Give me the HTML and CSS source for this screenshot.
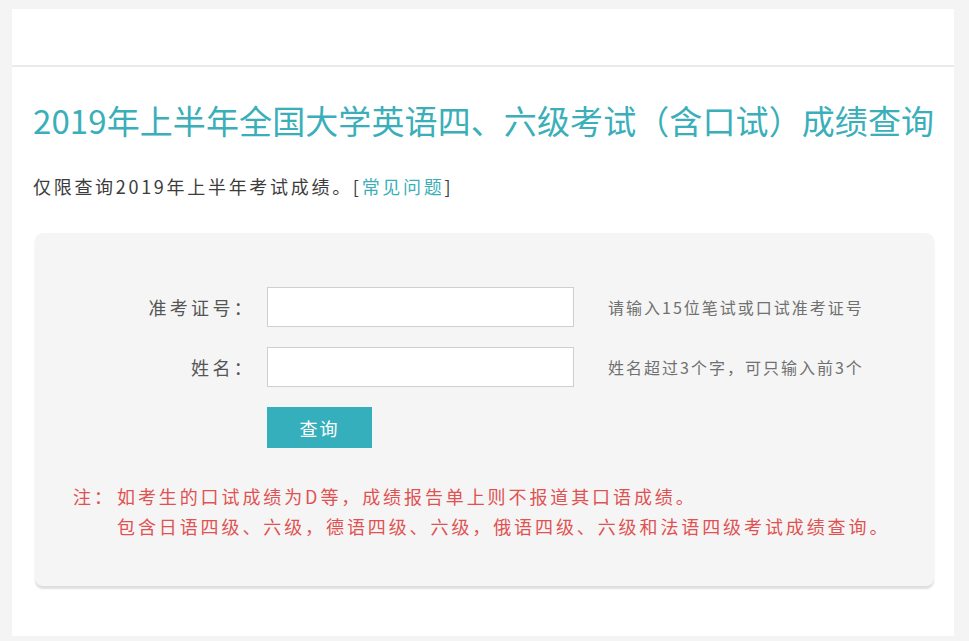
FILE: index.html
```html
<!DOCTYPE html>
<html lang="zh-CN">

<head>
    <meta charset="UTF-8">
    <meta name="viewport" content="width=device-width, initial-scale=1.0">
    <title>2019年上半年全国大学英语四、六级考试（含口试）成绩查询</title>
    <link rel="stylesheet" href="styles.css">
</head>

<body>
    <div class="page">
        <div class="page-header"></div>

        <div class="page-content">
            <h1 class="title">2019年上半年全国大学英语四、六级考试（含口试）成绩查询</h1>
            <p class="subtitle">仅限查询2019年上半年考试成绩。[<a href="#" class="faq-link">常见问题</a>]</p>

            <!-- Query Form -->
            <form class="query-box" id="query-form">
                <div class="form-row">
                    <label for="zkzh">准考证号：</label>
                    <input type="text" id="zkzh" name="zkzh">
                    <span class="hint">请输入15位笔试或口试准考证号</span>
                </div>

                <div class="form-row">
                    <label for="xm">姓名：</label>
                    <input type="text" id="xm" name="xm">
                    <span class="hint">姓名超过3个字，可只输入前3个</span>
                </div>

                <div class="form-row">
                    <span></span>
                    <button type="submit" class="btn-query">查询</button>
                </div>

                <!-- Notice -->
                <div class="note">
                    <span class="note-tag">注：</span>
                    <div class="note-text">
                        <p>如考生的口试成绩为D等，成绩报告单上则不报道其口语成绩。</p>
                        <p>包含日语四级、六级，德语四级、六级，俄语四级、六级和法语四级考试成绩查询。</p>
                    </div>
                </div>
            </form>
        </div>
    </div>
</body>

</html>
```

FILE: styles.css
```css
body {
    font-family: "Microsoft YaHei", "Noto Sans CJK SC", sans-serif;
    background: #f4f4f4;
    color: #333;
    margin: 0;
    padding: 9px 15px 5px 12px;
    box-sizing: border-box;
    height: 641px;
    overflow: hidden;
}

.page {
    background: #ffffff;
    height: 627px;
}

.page-header {
    height: 56px;
    border-bottom: 2px solid #ebebeb;
}

.page-content {
    padding: 32px 20px 0 23px;
}

.title {
    margin: 0 0 0 -2px;
    color: #3aafba;
    font-size: 33px;
    font-weight: normal;
    line-height: 42px;
    letter-spacing: 0.1px;
    white-space: nowrap;
}

.subtitle {
    margin: 33px 0 0 -2px;
    font-size: 18px;
    line-height: 24px;
    letter-spacing: 2.7px;
    color: #3c3c3c;
}

.faq-link {
    color: #3aafba;
    text-decoration: none;
}

.query-box {
    margin-top: 35px;
    background: #f5f5f5;
    border-radius: 8px;
    box-shadow: 0 3px 2px rgba(0, 0, 0, 0.13);
    padding: 54px 0 45px 0;
}

.form-row {
    display: grid;
    grid-template-columns: 220px 307px auto;
    column-gap: 12px;
    align-items: center;
    margin-bottom: 20px;
}

label {
    text-align: right;
    font-size: 18px;
    letter-spacing: 3.3px;
    color: #555;
}

input[type="text"] {
    height: 40px;
    border: 1px solid #cfcfcf;
    background: #ffffff;
    box-sizing: border-box;
    font-size: 16px;
    padding: 0 8px;
    font-family: inherit;
}

.hint {
    margin-left: 22px;
    font-size: 16px;
    letter-spacing: 2px;
    color: #707070;
}

.btn-query {
    width: 105px;
    height: 41px;
    border: none;
    background: #35afbb;
    color: #ffffff;
    font-family: inherit;
    font-size: 18px;
    letter-spacing: 2px;
    cursor: pointer;
}

.note {
    display: flex;
    margin: 33px 0 0 38px;
    color: #e05252;
    font-size: 18px;
    line-height: 30px;
    letter-spacing: 2.9px;
}

.note-tag {
    width: 44px;
    flex-shrink: 0;
}

.note-text p {
    margin: 0;
}
```
